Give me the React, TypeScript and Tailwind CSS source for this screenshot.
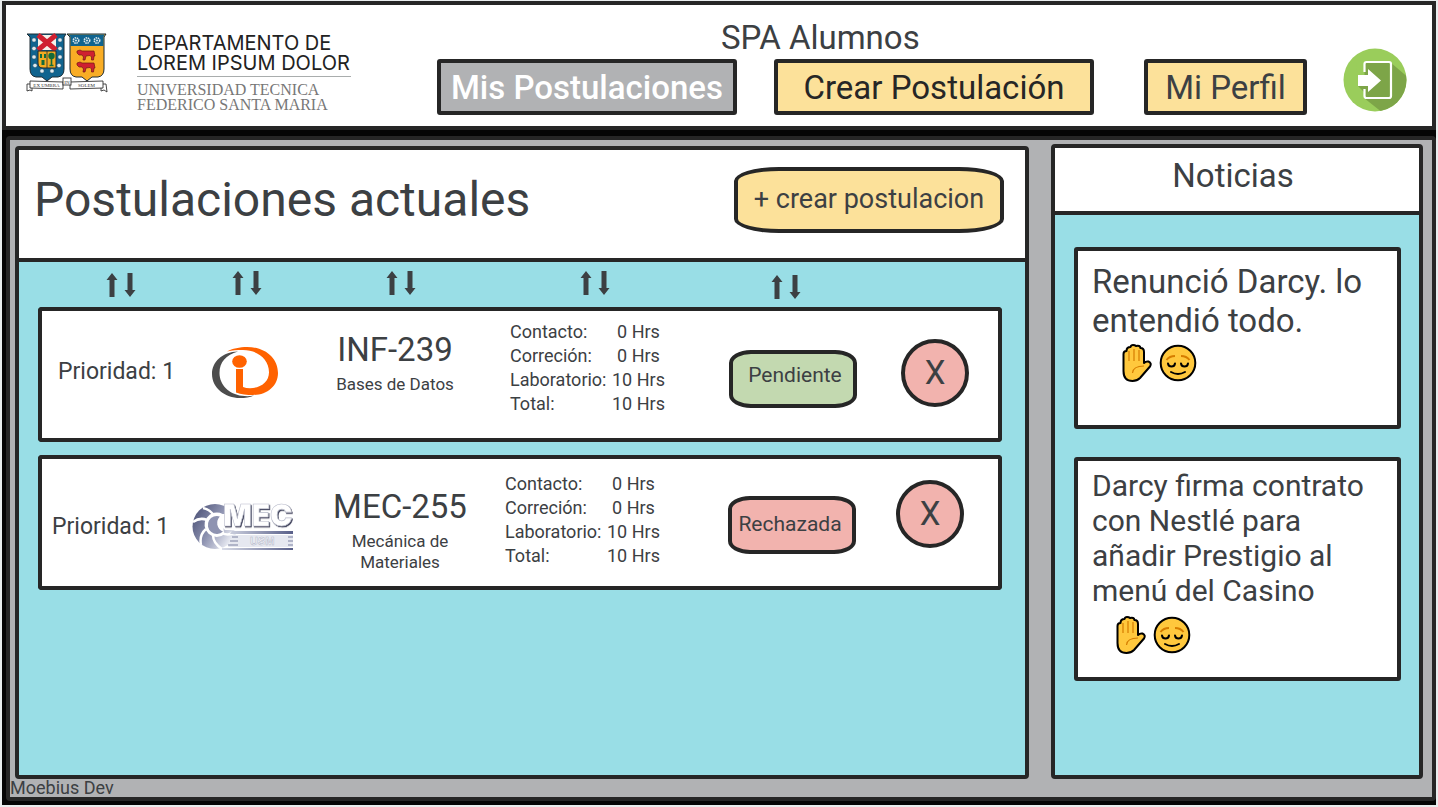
import React from "react";

const outline = "border-4 border-[#262626]";

function Crest() {
  const pearls = [
    [8, 7], [34, 7], [8, 15.5], [34, 15.5], [8, 24], [34, 24], [9, 32.5], [33, 32.5], [16, 38], [26, 38],
  ];
  return (
    <svg viewBox="0 0 82 60" className="h-[60px] w-[82px] shrink-0" role="img" aria-label="Escudo">
      <path d="M1 1H40l-2 3v32q0 7-6 8h-6l-5 4-5-4h-6q-6-1-6-8V4z" fill="#10648f" stroke="#1c2b33" strokeWidth="1" />
      <rect x="12" y="2" width="18" height="15" fill="#f4f1ea" />
      <path d="M12 2l18 15M30 2L12 17" stroke="#cf2030" strokeWidth="5" />
      <path d="M12 18h18v17H17q-5 0-5-5z" fill="#f3ab22" stroke="#1c2b33" strokeWidth="1" />
      <path d="M21 18v17" stroke="#1c2b33" strokeWidth="0.8" />
      <path d="M14 21h2v4h-2zM18 21h2v4h-2zM15.500 27h3v5h-3z" fill="#136b3a" />
      <circle cx="25.500" cy="23" r="3.200" fill="#136b3a" />
      <path d="M25.500 25v7M23.500 32.500h4" stroke="#136b3a" strokeWidth="1.600" />
      {pearls.map(([x, y]) => (
        <circle key={`${x}-${y}`} cx={x} cy={y} r="2.100" fill="#dfe9ee" stroke="#33505f" strokeWidth="0.400" />
      ))}
      <path d="M41 1H80l-2 3v32q0 7-6 8h-6l-5 4-5-4h-6q-6-1-6-8V4z" fill="#f9ad25" stroke="#1c2b33" strokeWidth="1" />
      <path d="M42.500 1.500h36L77.500 4v9H44.500V4z" fill="#10648f" />
      {[50, 61, 71].map((x) => (
        <g key={x}>
          <circle cx={x} cy="7.500" r="2.700" fill="none" stroke="#dfe9ee" strokeWidth="1.600" strokeDasharray="1.500 0.700" />
          <circle cx={x} cy="7.500" r="1" fill="#dfe9ee" />
        </g>
      ))}
      {[17, 29].map((y) => (
        <path
          key={y}
          transform={`translate(51 ${y})`}
          d="M0 1l3-1 2 1h12l1 5-1 0-.5 4h-2l0-3-1.500-1.500-4 .500-1 4H6l.5-3-1.500-2-3 0-2-2z"
          fill="#cf2030"
          stroke="#6d1a16"
          strokeWidth="0.700"
        />
      ))}
      <path d="M1 51h5v7l-2-1-3 1zM75 51h5l1 8-3-2-3 1z" fill="#fff" stroke="#333" strokeWidth="0.900" />
      <path d="M4 48l33 1v7L4 55zM44 49l33-1v7l-33 1z" fill="#fff" stroke="#333" strokeWidth="0.900" />
      <rect x="37" y="45" width="8" height="7" fill="#fff" stroke="#333" strokeWidth="0.900" />
      <g fill="#333" fontFamily="Liberation Serif, serif" fontSize="5" textAnchor="middle">
        <text x="20.500" y="53.500">EX UMBRA</text>
        <text x="41" y="50.500">IN</text>
        <text x="60.500" y="53.500">SOLEM</text>
      </g>
    </svg>
  );
}

function ExitIcon() {
  return (
    <svg viewBox="0 0 64 64" className="size-16" aria-hidden="true">
      <defs>
        <clipPath id="exit-disc">
          <circle cx="32" cy="32" r="31.500" />
        </clipPath>
      </defs>
      <g clipPath="url(#exit-disc)">
        <rect width="64" height="64" fill="#9acd5b" />
        <path d="M47 14l20 17v34H40L21 50V44l-6-6 8-20z" fill="#7da548" />
        <path d="M15 38V27h9v-7l-3-4V14h-8z" fill="#9acd5b" />
      </g>
      <path d="M21.500 24V16q0-2 2-2H46q2 0 2 2V48q0 2-2 2H23.500q-2 0-2-2V41" fill="#7da548" stroke="#fff" strokeWidth="2.200" />
      <path d="M15 27h10v-6l13 11.500L25 44v-6H15z" fill="#fff" />
    </svg>
  );
}

function SortArrows() {
  return (
    <svg viewBox="0 0 30 24" className="h-6 w-[30px] shrink-0" fill="#3c4043" aria-hidden="true">
      <path d="M6 0l5.500 7H8.500V24h-5V7H.5z" />
      <path d="M24 24l-5.500-7h3V0h5v17h3z" />
    </svg>
  );
}

function InformaticaLogo() {
  return (
    <svg viewBox="0 0 66 52" className="h-[52px] w-[66px]" role="img" aria-label="Informática">
      <path d="M26 4.500C10 5 0 15 0 27c0 14 13 24 28 24 5 0 10-.5 14-2.500-4 .8-8 .8-12 .3C17 47 7.500 38 7.500 26 7.500 15 14 8 26 4.500z" fill="#4d4d4d" />
      <path d="M15 4.500C20 1.500 28 0 35 0c18 0 31 11 31 26 0 13-11 22-25 22-6 0-12-.3-17-2.500V22h7v18q3 1.200 7 1.200c10 0 19-6 19-16C57 12 45 3 31 3c-6 0-11 .3-16 1.500z" fill="#ff6200" />
      <ellipse cx="27.500" cy="14.500" rx="7.300" ry="6.300" fill="#ff6200" />
    </svg>
  );
}

function MecanicaLogo() {
  return (
    <svg viewBox="0 0 102 48" className="h-12 w-[102px] overflow-visible" role="img" aria-label="Mecánica">
      <defs>
        <linearGradient id="mec-wheel" x1="0" y1="0" x2="1" y2="0.600">
          <stop offset="0" stopColor="#42486e" />
          <stop offset="0.550" stopColor="#8e93b1" />
          <stop offset="1" stopColor="#eceef5" />
        </linearGradient>
        <linearGradient id="mec-bar" x1="0" y1="0" x2="1" y2="0">
          <stop offset="0" stopColor="#d9dce8" />
          <stop offset="1" stopColor="#585f89" />
        </linearGradient>
        <filter id="mec-shadow" x="-10%" y="-10%" width="120%" height="130%">
          <feDropShadow dx="1" dy="1.200" stdDeviation="0.700" floodColor="#3f435c" floodOpacity="1" />
        </filter>
      </defs>
      <circle cx="23" cy="23.500" r="22.500" fill="url(#mec-wheel)" />
      <path
        d="M22 12Q17 6 11 5M15 17Q8 14 1 19M14 26Q7 32 9 42M21 32Q21 40 30 46M30 30Q38 34 45 27"
        fill="none"
        stroke="#fff"
        strokeWidth="2.500"
      />
      <path d="M30 12A11 11 0 1 0 32 30" fill="#fff" stroke="#fff" strokeWidth="2.500" />
      <path d="M28 13.500A9 9 0 1 0 31 28.500A9 9 0 0 1 28 13.500" fill="#8e93b1" />
      <path d="M28 11h20v16H33q-7-5-5-16z" fill="#fff" />
      <path d="M40 28h61v3H38zM30 45h71v2H30z" fill="url(#mec-bar)" />
      <path d="M42 32h59v12H36z" fill="#e6e8f0" />
      <path d="M40 34h6M38 38h8M36 42h10M96 34h5M96 38h5M96 42h5" stroke="#7b80a0" strokeWidth="1" />
      <text x="58" y="42" fontFamily="Liberation Sans, sans-serif" fontWeight="bold" fontSize="11" fill="#f3f4f8" stroke="#b4b7c8" strokeWidth="0.500">
        USM
      </text>
      <text
        x="31"
        y="23"
        fontFamily="Inter, sans-serif"
        fontWeight="900"
        fontSize="30"
        fill="#fff"
        stroke="#b9bccb"
        strokeWidth="0.600"
        filter="url(#mec-shadow)"
      >
        MEC
      </text>
    </svg>
  );
}

function HandEmoji() {
  return (
    <svg viewBox="0 0 30 38" className="h-[38px] w-[30px]" role="img" aria-label="Mano levantada">
      <path
        d="M1.500 10q0-3 3-3 0-4 4-4Q9 1 11 1t3 1q4-1 4.500 2 3.500 0 3.500 4v11q2-2 4.500-1.500Q30 19 28 22.500L18 34q-3 3-7.500 3-9 0-9-10z"
        fill="#ffc83d"
        stroke="#000"
        strokeWidth="2"
        strokeLinejoin="round"
      />
      <path d="M7 7v10M12 5v12M17 6v11M22 22q-11 0-11.500 7" fill="none" stroke="#d67d00" strokeWidth="1.200" />
    </svg>
  );
}

function RelievedEmoji() {
  return (
    <svg viewBox="0 0 38 38" className="size-[38px]" role="img" aria-label="Cara aliviada">
      <circle cx="19" cy="19" r="17.300" fill="#ffc83d" stroke="#000" strokeWidth="2" />
      <path d="M7.500 16q3-4 8.500-4M30.500 16q-3-4-8.500-4" fill="none" stroke="#d67d00" strokeWidth="2" />
      <path
        d="M9 19.500q.5 3 3.500 3t3.500-3M22 19.500q.5 3 3.500 3t3.500-3M12 28q7 4 14 0"
        fill="none"
        stroke="#000"
        strokeWidth="2"
        strokeLinecap="round"
      />
    </svg>
  );
}

const rows = [
  {
    code: "INF-239",
    name: "Bases de Datos",
    logo: <InformaticaLogo />,
    status: "Pendiente",
    statusColor: "bg-[#c3d9b0] pb-1.5 pl-1",
    priorityPad: "pl-4 pb-1.5",
    logoPad: "pl-[26px] pb-1",
    codePad: "pr-2.5 pb-6",
    hoursPad: "pl-[30px] pb-3.5",
    statusPad: "pl-[29px] pt-2",
    removePad: "pl-[21px] pb-1",
  },
  {
    code: "MEC-255",
    name: "Mecánica de Materiales",
    logo: <MecanicaLogo />,
    status: "Rechazada",
    statusColor: "bg-[#f2b3ae] pr-1",
    priorityPad: "pl-[10px] pt-2",
    logoPad: "pl-1.5 pt-2",
    codePad: "px-2 pt-3.5",
    hoursPad: "pl-[25px] pb-1.5",
    statusPad: "pl-[28px] pt-1",
    removePad: "pl-4 pb-[18px]",
  },
];

const hours = [
  ["Contacto:", "0 Hrs"],
  ["Correción:", "0 Hrs"],
  ["Laboratorio:", "10 Hrs"],
  ["Total:", "10 Hrs"],
];

const sortColumns = [
  { label: "prioridad", pad: "pl-[68px] pt-0.5" },
  { label: "departamento", pad: "pl-[46px]" },
  { label: "ramo", pad: "pl-[66px]" },
  { label: "horas", pad: "pl-[100px]" },
  { label: "estado", pad: "pl-[71px] pt-1" },
];

const cell = "border-y-4 border-[#262626] bg-white p-0 align-middle";

export default function App() {
  return (
    <div className="flex min-h-screen flex-col bg-[#e9edee] px-0.5 pt-px pb-0.5 font-['Roboto',sans-serif] text-[#3c4043]">
      <header className={`flex h-[129px] items-start bg-white pl-5 pr-[25px] ${outline}`}>
        <div className="flex items-start gap-[29px] pt-7">
          <Crest />
          <div className="w-[214px] whitespace-nowrap">
            <div className="border-b border-[#a9adad] pb-[3px] font-['Inter',sans-serif] text-[20px] leading-5 text-[#222]">
              <p>DEPARTAMENTO DE</p>
              <p>LOREM IPSUM DOLOR</p>
            </div>
            <div className="pt-[5px] font-['Liberation_Serif',serif] text-[16px] leading-[15px] text-[#777]">
              <p>UNIVERSIDAD TECNICA</p>
              <p>FEDERICO SANTA MARIA</p>
            </div>
          </div>
        </div>
        <div className="mr-9 ml-auto pt-[13px]">
          <h1 className="pl-[284px] text-[33px] leading-10">SPA Alumnos</h1>
          <nav className="mt-px flex text-[33px] leading-none">
            <button className={`h-14 w-[300px] rounded-[3px] bg-[#b1b2b4] font-medium text-white ${outline}`}>
              Mis Postulaciones
            </button>
            <button className={`ml-[37px] h-14 w-80 rounded-[3px] bg-[#fce19a] text-[#262626] ${outline}`}>
              Crear Postulación
            </button>
            <button className={`ml-[50px] h-14 w-[163px] rounded-[3px] bg-[#fce19a] ${outline}`}>Mi Perfil</button>
          </nav>
        </div>
        <button className="mt-[43px] rounded-full" aria-label="Salir">
          <ExitIcon />
        </button>
      </header>

      <div className="flex flex-1 flex-col bg-[#050505] pt-1.5 pb-1 pl-1">
        <div className={`flex flex-1 flex-col rounded-sm bg-[#b1b2b4] ${outline}`}>
          <main className="flex flex-1 gap-[22px] pt-1 pr-[9px] pl-[5px]">
            <section className={`mt-0.5 flex-1 rounded-sm bg-[#99dee6] ${outline}`}>
              <div className="flex h-[112px] items-center justify-between border-b-4 border-[#262626] bg-white pr-[21px] pb-2 pl-[15px]">
                <h2 className="text-[48px] leading-none">Postulaciones actuales</h2>
                <button className={`h-[66px] w-[270px] rounded-[45px/14px] bg-[#fce19a] pb-0.5 text-[27px] leading-none ${outline}`}>
                  + crear postulacion
                </button>
              </div>
              <div className="pr-[23px] pl-[19px]">
                <table className="w-full table-fixed border-separate border-spacing-x-0 border-spacing-y-[13px]">
                  <colgroup>
                    <col className="w-[148px]" />
                    <col className="w-[134px]" />
                    <col className="w-[160px]" />
                    <col className="w-[220px]" />
                    <col className="w-[180px]" />
                    <col className="w-[122px]" />
                  </colgroup>
                  <thead>
                    <tr className="h-[19px]">
                      {sortColumns.map((c) => (
                        <th key={c.label} className={`p-0 align-top ${c.pad}`}>
                          <button className="flex h-[15px] items-center" aria-label={`Ordenar por ${c.label}`}>
                            <SortArrows />
                          </button>
                        </th>
                      ))}
                      <td className="p-0" />
                    </tr>
                  </thead>
                  <tbody>
                    {rows.map((r) => (
                      <tr key={r.code} className="h-[135px]">
                        <td className={`rounded-l-sm border-l-4 ${cell}`}>
                          <p className={`whitespace-nowrap text-[23px] leading-7 ${r.priorityPad}`}>Prioridad: 1</p>
                        </td>
                        <td className={cell}>
                          <div className={r.logoPad}>{r.logo}</div>
                        </td>
                        <td className={cell}>
                          <div className={`text-center ${r.codePad}`}>
                            <p className="whitespace-nowrap text-[33px] leading-10">{r.code}</p>
                            <p className="mt-1 text-[17px] leading-[21px]">{r.name}</p>
                          </div>
                        </td>
                        <td className={cell}>
                          <dl className={`box-content grid w-fit grid-cols-[102px_auto] text-[18px] leading-6 whitespace-nowrap ${r.hoursPad}`}>
                            {hours.map(([k, v]) => (
                              <React.Fragment key={k}>
                                <dt>{k}</dt>
                                <dd className="text-center">{v}</dd>
                              </React.Fragment>
                            ))}
                          </dl>
                        </td>
                        <td className={cell}>
                          <div className={r.statusPad}>
                            <span
                              className={`flex h-[58px] w-32 items-center justify-center rounded-[22px/13px] text-[21px] leading-none ${outline} ${r.statusColor}`}
                            >
                              {r.status}
                            </span>
                          </div>
                        </td>
                        <td className={`rounded-r-sm border-r-4 ${cell}`}>
                          <div className={r.removePad}>
                            <button
                              className={`block size-[68px] rounded-full bg-[#f2b3ae] text-[33px] leading-none ${outline}`}
                              aria-label={`Eliminar ${r.code}`}
                            >
                              X
                            </button>
                          </div>
                        </td>
                      </tr>
                    ))}
                  </tbody>
                </table>
              </div>
            </section>

            <aside className={`w-[372px] rounded-sm bg-[#99dee6] ${outline}`}>
              <h2 className="h-[67px] border-b-4 border-[#262626] bg-white pt-2 pr-2 text-center text-[33px] leading-10">
                Noticias
              </h2>
              <div className="flex flex-col gap-7 pt-8 pr-[18px] pl-[19px]">
                <article className={`h-[182px] rounded-[3px] bg-white pt-[11px] pl-3.5 ${outline}`}>
                  <p className="text-[33px] leading-[39px]">
                    Renunció Darcy. lo
                    <br />
                    entendió todo.
                  </p>
                  <div className="mt-1 flex gap-[7px] pl-[30px]">
                    <HandEmoji />
                    <RelievedEmoji />
                  </div>
                </article>
                <article className={`h-56 rounded-[3px] bg-white pt-[7px] pl-3.5 ${outline}`}>
                  <p className="text-[30px] leading-[35px]">
                    Darcy firma contrato
                    <br />
                    con Nestlé para
                    <br />
                    añadir Prestigio al
                    <br />
                    menú del Casino
                  </p>
                  <div className="mt-2 flex gap-[7px] pl-6">
                    <HandEmoji />
                    <RelievedEmoji />
                  </div>
                </article>
              </div>
            </aside>
          </main>
          <footer className="text-[18px] leading-[18px]">Moebius Dev</footer>
        </div>
      </div>
    </div>
  );
}
